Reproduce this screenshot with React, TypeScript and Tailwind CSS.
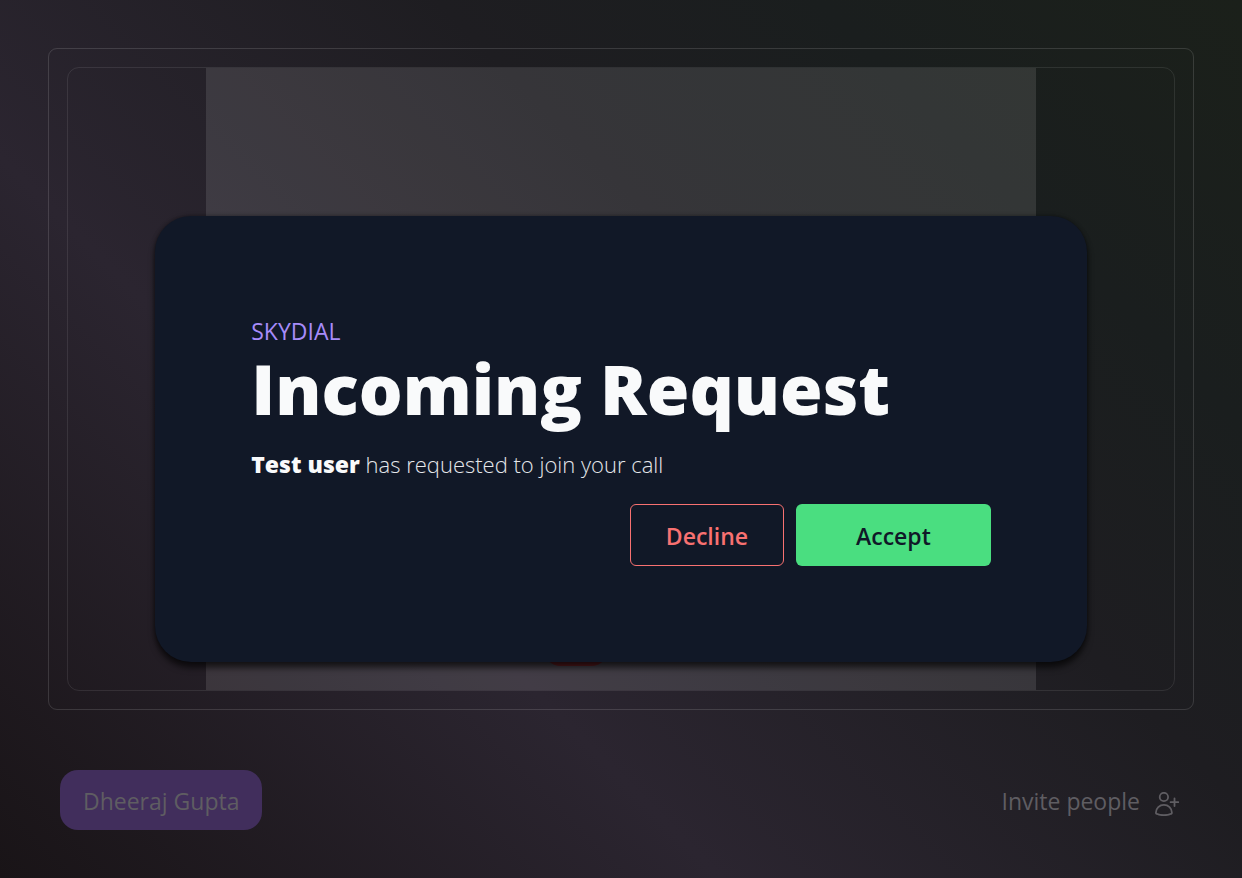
import { useState } from "react";

function InviteIcon() {
  return (
    <svg
      aria-hidden="true"
      className="mb-[3px] size-6 self-end"
      viewBox="0 0 24 24"
      fill="none"
      stroke="currentColor"
      strokeWidth="1.8"
      strokeLinecap="round"
      strokeLinejoin="round"
    >
      <circle cx="8.900" cy="5" r="4.200" />
      <path d="M8.900 12.900c-4.400 0-8 3.300-8 7.800 0 .6.2.9.7 1.100 2 .9 4.500 1.400 7.300 1.400s5.300-.5 7.300-1.400c.5-.2.7-.5.7-1.100 0-4.500-3.600-7.800-8-7.800Z" />
      <path d="M19.500 6.300v7.800M15.600 10.200h7.800" />
    </svg>
  );
}

function IncomingRequest({ name }: { name: string }) {
  return (
    <section
      role="dialog"
      aria-modal="true"
      aria-labelledby="request-title"
      className="w-3/4 rounded-[36px] bg-[#111827] p-24 shadow-[0_6px_6px_rgba(0,0,0,0.6),0_0_4px_rgba(0,0,0,0.4)]"
    >
      <p className="text-[23px] leading-[38px] text-[#a78bfa] uppercase">Skydial</p>
      <h1 id="request-title" className="text-[69px] leading-[76px] font-black whitespace-nowrap text-gray-50">
        Incoming Request
      </h1>
      <p className="mt-5 text-[22px] leading-9 font-light text-gray-200">
        <strong className="text-[23px] font-black text-gray-50">{name}</strong> has requested to join your call
      </p>
      <div className="mt-[22px] flex justify-end gap-3 text-[23px] leading-9 font-semibold">
        <button type="button" className="rounded-md border border-[#f87171] px-[35px] pt-[13px] pb-[11px] text-[#f87171]">
          Decline
        </button>
        <button type="button" className="rounded-md bg-[#4ade80] px-[60px] pt-[13px] pb-[11px] text-gray-900">
          Accept
        </button>
      </div>
    </section>
  );
}

export default function App() {
  const [user] = useState("Dheeraj Gupta");

  return (
    <div className="relative flex min-h-screen flex-col bg-[linear-gradient(45deg,#191417_0%,#2b2530_34%,#1e1d21_62%,#1a1e1e_80%,#1b201a_100%)] p-12 font-['Open_Sans',sans-serif]">
      <main className="rounded-[9px] border border-white/13 p-[18px]">
        <div className="relative flex justify-center overflow-hidden rounded-xl border border-white/9">
          <div className="aspect-[4/3] w-3/4 bg-white/11" />
          <div className="absolute bottom-6 flex gap-6">
            <button type="button" aria-label="End call" className="h-15 w-[66px] rounded-[18px] bg-[#5a1b20]" />
            <span className="w-[66px]" />
          </div>
        </div>
      </main>
      <footer className="mt-[60px] flex items-center justify-between px-3 text-[23px] leading-9 text-[#5f5d62]">
        <button type="button" className="rounded-[18px] bg-[#412e5c] px-[23px] pt-[13px] pb-[11px]">
          {user}
        </button>
        <button type="button" className="flex items-center gap-[15px] pt-0.5 pr-[3px]">
          Invite people
          <InviteIcon />
        </button>
      </footer>
      <div className="absolute inset-0 flex items-center justify-center">
        <IncomingRequest name="Test user" />
      </div>
    </div>
  );
}
